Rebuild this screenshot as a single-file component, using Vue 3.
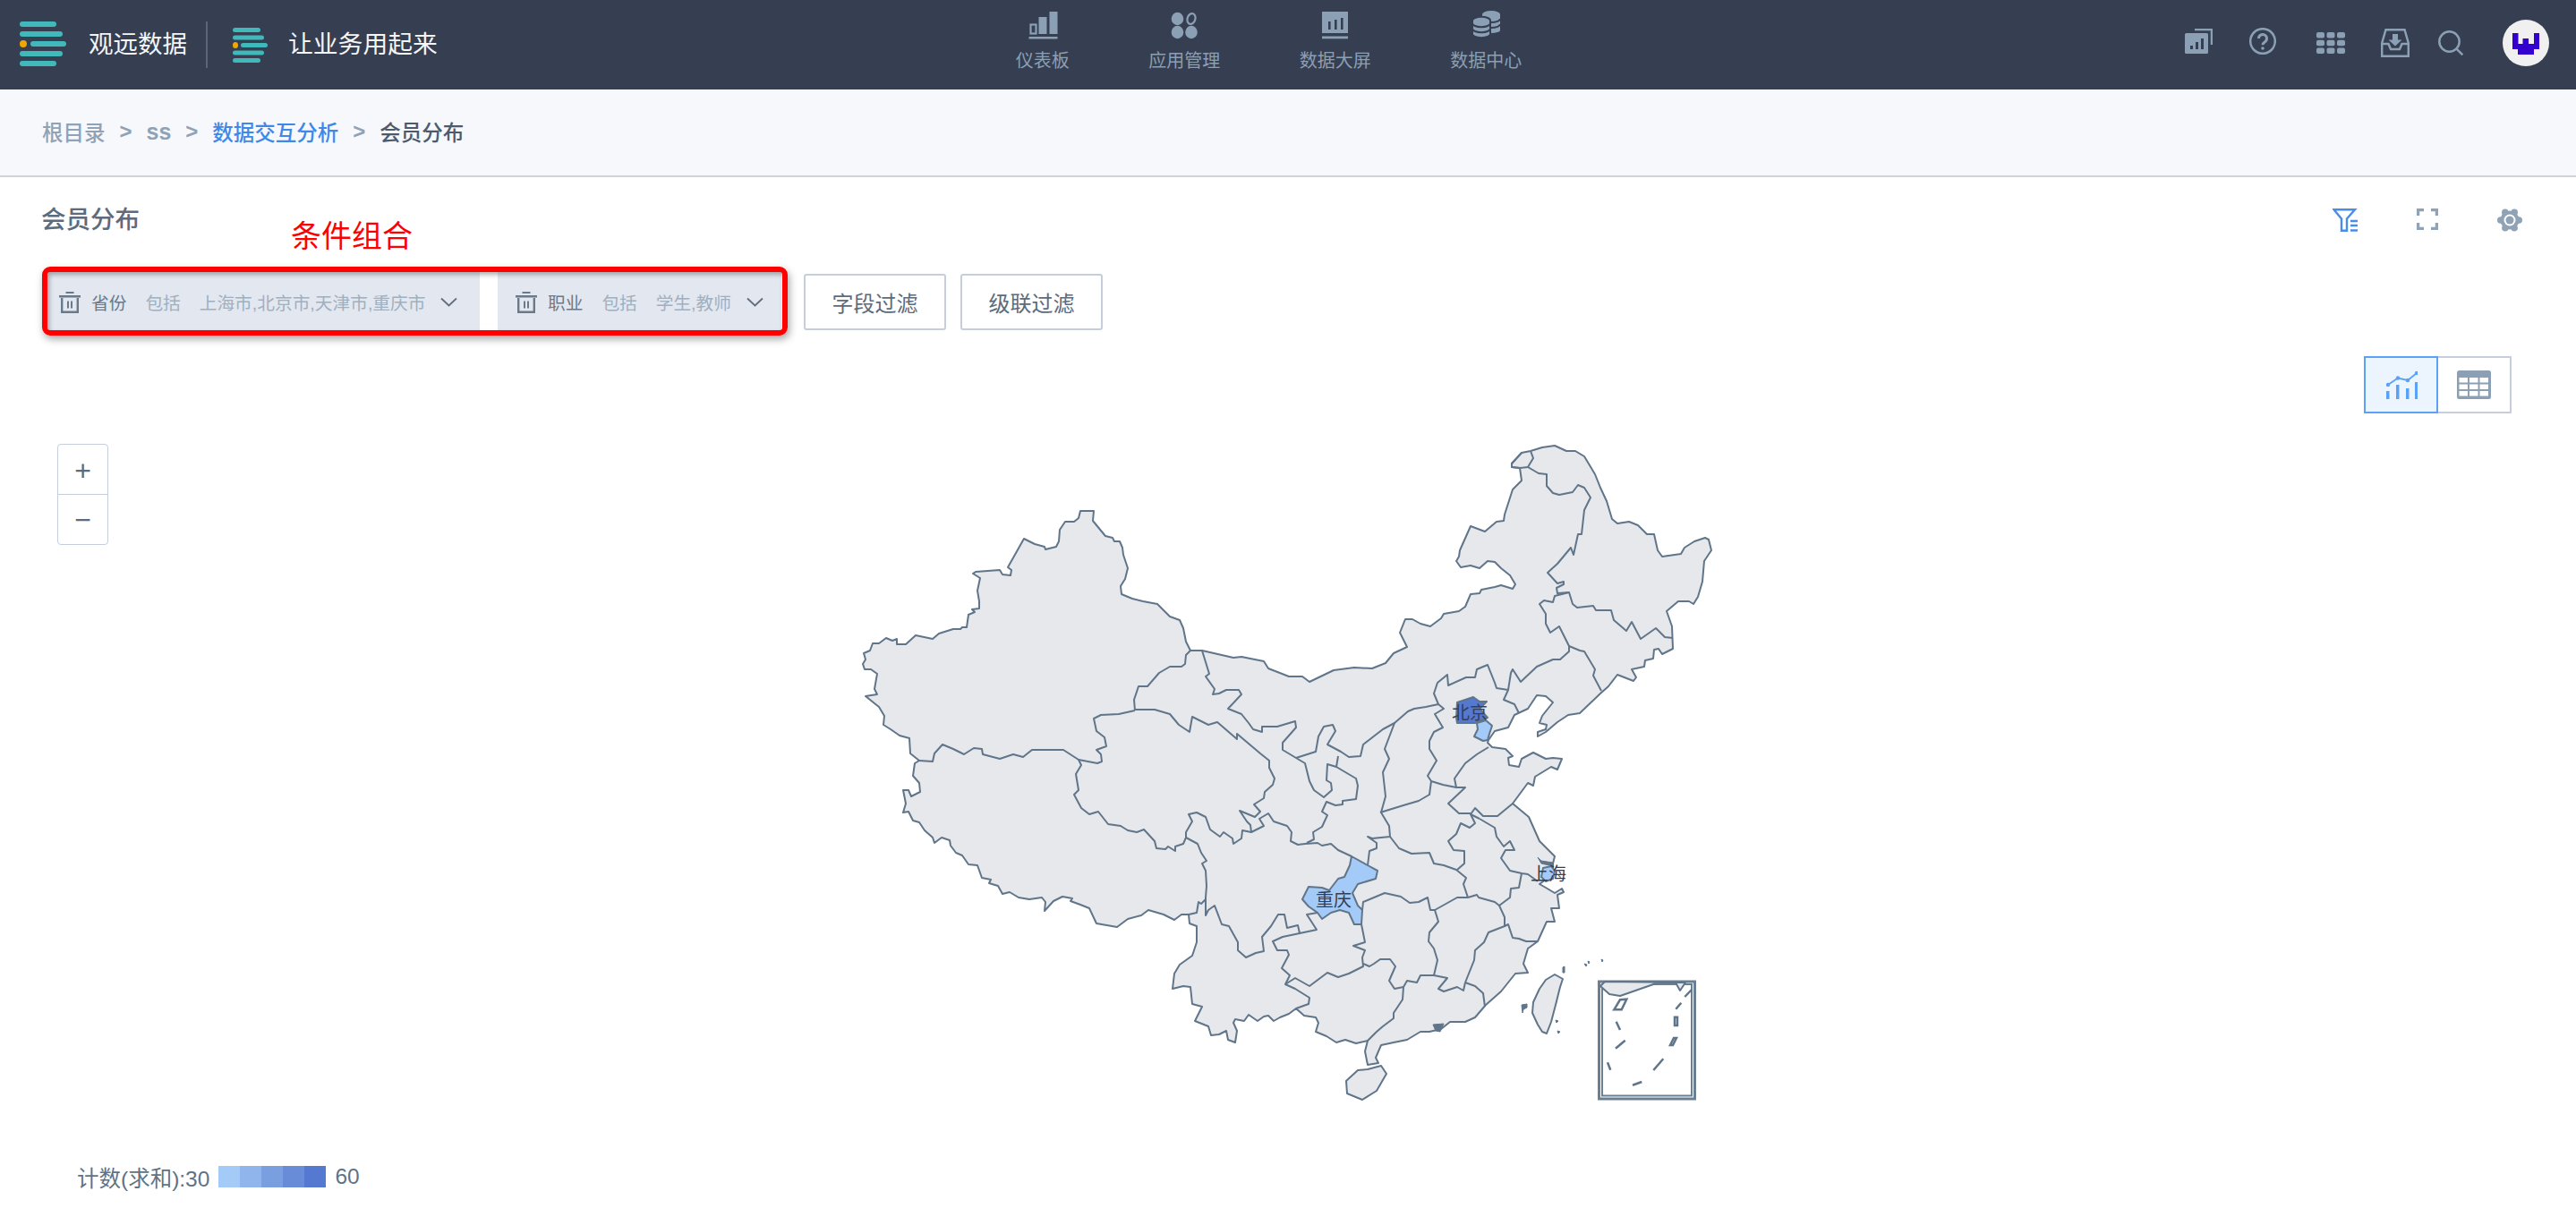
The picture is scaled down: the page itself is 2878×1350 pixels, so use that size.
<template>
  <div class="page">
    <header class="top-bar">
      <div class="brand">
        <svg class="logo-main" width="52" height="50" viewBox="0 0 52 50">
          <rect x="0" y="0" width="41" height="6" rx="3" />
          <rect x="0" y="11" width="48" height="6" rx="3" />
          <ellipse class="dot" cx="4" cy="25" rx="4" ry="4" />
          <rect x="12" y="22" width="40" height="6" rx="3" />
          <rect x="0" y="33" width="48" height="6" rx="3" />
          <rect x="0" y="44" width="41" height="6" rx="3" />
        </svg>
        <span class="brand-name">观远数据</span>
        <i class="brand-line"></i>
        <svg class="logo-sub" width="39" height="39" viewBox="0 0 39 39">
          <rect x="0" y="0" width="31" height="5" rx="2.5" />
          <rect x="0" y="8.5" width="35" height="5" rx="2.5" />
          <ellipse class="dot" cx="3" cy="19.5" rx="3" ry="3.5" />
          <rect x="9" y="17" width="30" height="5" rx="2.5" />
          <rect x="0" y="25.5" width="35" height="5" rx="2.5" />
          <rect x="0" y="34" width="31" height="5" rx="2.5" />
        </svg>
        <span class="brand-slogan">让业务用起来</span>
      </div>

      <nav class="main-nav">
        <a class="nav-item">
          <svg width="36" height="32" viewBox="0 0 36 32">
            <rect class="ln" x="4.5" y="15.5" width="6" height="10" />
            <rect x="13.5" y="7" width="9" height="19" />
            <rect x="25.5" y="1" width="9" height="25" />
            <rect x="2.5" y="29" width="32" height="2.5" />
          </svg>
          <span>仪表板</span>
        </a>
        <a class="nav-item">
          <svg width="36" height="32" viewBox="0 0 36 32">
            <ellipse cx="10.5" cy="9" rx="6.8" ry="7.2" />
            <ellipse class="ln" cx="26" cy="9" rx="4.4" ry="6" transform="rotate(18 26 9)" />
            <ellipse cx="10.5" cy="24" rx="6.8" ry="7.2" />
            <ellipse cx="26" cy="24" rx="6.8" ry="7.2" />
          </svg>
          <span>应用管理</span>
        </a>
        <a class="nav-item">
          <svg width="36" height="32" viewBox="0 0 36 32">
            <rect x="3" y="1" width="29" height="24" />
            <rect class="cut" x="10" y="12" width="2.6" height="9" />
            <rect class="cut" x="17" y="10" width="2.6" height="11" />
            <rect class="cut" x="24" y="8" width="2.6" height="13" />
            <rect x="3" y="28.5" width="29" height="2.8" />
          </svg>
          <span>数据大屏</span>
        </a>
        <a class="nav-item">
          <svg width="36" height="32" viewBox="0 0 36 32">
            <path d="M14 4a10 4 0 0 1 20 0v18a10 3 0 0 1-20 0z" />
            <path class="cut-line" d="M14 9a10 4 0 0 0 20 0M14 15a10 4 0 0 0 20 0" />
            <path class="front-coin" d="M3 11a10 4.2 0 0 1 20 0v16a10 4.2 0 0 1-20 0z" />
            <path class="cut-line" d="M3 14a10 4.2 0 0 0 20 0M3 20a10 4.2 0 0 0 20 0M3 26a10 4.2 0 0 0 20 0" />
          </svg>
          <span>数据中心</span>
        </a>
      </nav>

      <div class="tools">
        <svg class="tool-cards" width="31" height="28" viewBox="0 0 31 28">
          <path class="ln-wide" d="M11 1H30V18" />
          <rect x="0" y="5" width="26" height="23" rx="1.5" />
          <rect class="cut" x="6" y="19" width="3" height="4" />
          <rect class="cut" x="12" y="15" width="3" height="8" />
          <rect class="cut" x="18" y="11" width="3" height="12" />
        </svg>
        <svg class="tool-help" width="30" height="30" viewBox="0 0 30 30">
          <circle class="ln-wide" cx="15" cy="15" r="13.8" />
          <path class="ln-q" d="M10.5 12a4.5 4.5 0 1 1 7 3.7c-1.6 1-2.5 1.7-2.5 3.6" />
          <circle cx="15" cy="23" r="1.8" />
        </svg>
        <svg class="tool-grid" width="32" height="24" viewBox="0 0 32 24">
          <rect v-for="c in gridCells" :key="c.x + '-' + c.y" :x="c.x" :y="c.y" width="9" height="6.5" rx="2" />
        </svg>
        <svg class="tool-inbox" width="32" height="32" viewBox="0 0 32 32">
          <path class="ln-wide" d="M5.500 1.200H26.500L30.800 16V30.800H1.200V16ZM1.200 17H8.500L11 23H21L23.500 17H30.800" />
          <path d="M13 6H19V12.500H23.500L16 19.500 8.500 12.500H13Z" />
        </svg>
        <svg class="tool-search" width="28" height="28" viewBox="0 0 28 28">
          <circle class="ln-wide" cx="12.500" cy="12.500" r="11.200" />
          <path class="ln-wide" d="M20.800 20.800L27.300 27.300" />
        </svg>
        <div class="avatar">
          <svg width="30" height="24" viewBox="0 0 30 24">
            <polygon points="0,0 6.500,0 6.500,12 11.500,12 11.500,6 18,6 18,12 24,12 24,0 30,0 30,18 24,18 24,24 6,24 6,18 0,18" />
          </svg>
        </div>
      </div>
    </header>

    <div class="crumbs">
      <span class="crumb">根目录</span>
      <span class="sep">&gt;</span>
      <span class="crumb latin">ss</span>
      <span class="sep">&gt;</span>
      <span class="crumb link">数据交互分析</span>
      <span class="sep">&gt;</span>
      <span class="crumb current">会员分布</span>
    </div>

    <section class="title-row">
      <h2>会员分布</h2>
      <div class="title-actions">
        <svg width="28" height="26" viewBox="0 0 28 26">
          <path class="blue-line" d="M1.500 1.200H25L16 11.500V24.800H10V11.500Z" />
          <path class="blue-line" d="M20 14H28M20 19H28M20 24.500H28" />
        </svg>
        <svg width="24" height="24" viewBox="0 0 24 24">
          <path class="grey-line" d="M1.500 8V1.500H8M16 1.500H22.500V8M22.500 16V22.500H16M8 22.500H1.500V16" />
        </svg>
        <svg width="28" height="26" viewBox="0 0 28 26">
          <circle class="gear" cx="14" cy="13" r="10.500" />
          <circle v-for="l in gearLobes" :key="l.x" class="gear" :cx="l.x" :cy="l.y" r="3.800" />
          <circle class="gear-ring" cx="14" cy="13" r="6.500" />
          <circle class="gear" cx="14" cy="13" r="4.500" />
        </svg>
      </div>
    </section>

    <section class="filter-row">
      <div v-for="f in filters" :key="f.name" class="filter-item" :class="f.cls">
        <svg class="trash" width="24" height="25" viewBox="0 0 24 25">
          <path d="M0 5H24V7.500H0ZM7.500 1H16.500V3H7.500Z" />
          <path class="trash-box" d="M3.200 8V23.800H20.800V8" />
          <path d="M9 11.500H11V19.500H9ZM13 11.500H15V19.500H13Z" />
        </svg>
        <span class="filter-name">{{ f.name }}</span>
        <span class="filter-op">包括</span>
        <span class="filter-value">{{ f.value }}</span>
        <svg class="chevron" width="19" height="11" viewBox="0 0 19 11">
          <path d="M1 1.500L9.500 9.500 18 1.500" />
        </svg>
      </div>
      <button class="filter-btn first">字段过滤</button>
      <button class="filter-btn">级联过滤</button>

      <!-- 标注框 -->
      <div class="mark-box"></div>
      <span class="mark-text">条件组合</span>
    </section>

    <section class="view-row">
      <div class="view-toggle">
        <div class="view-cell active">
          <svg width="36" height="32" viewBox="0 0 36 32">
            <path class="trend" d="M3 16L14 8.500 25 11 35 3" />
            <circle cx="3" cy="16" r="2.200" />
            <circle cx="14" cy="8.500" r="2.200" />
            <circle cx="25" cy="11" r="2.200" />
            <circle cx="35" cy="3" r="2.200" />
            <rect x="1" y="23" width="3.500" height="9" />
            <rect x="12" y="16" width="3.500" height="16" />
            <rect x="23" y="20" width="3.500" height="12" />
            <rect x="33" y="13" width="3.500" height="19" />
          </svg>
        </div>
        <div class="view-cell">
          <svg width="38" height="32" viewBox="0 0 38 32">
            <rect class="table-bg" width="38" height="32" rx="2.500" />
            <rect v-for="c in tableCells" :key="c.x + '-' + c.y" class="table-cell" :x="c.x" :y="c.y" width="9.500" height="5.500" />
          </svg>
        </div>
      </div>
    </section>

    <section class="chart">
      <svg class="map" viewBox="0 462 2878 888" width="2878" height="888">
        <path class="land" :d="mainland" />
        <path class="region light" :d="chongqing" />
        <path class="region dark" :d="beijing" />
        <path class="region light" :d="tianjin" />
        <path class="region light" :d="shanghai" />
        <path v-for="(b, i) in borders" :key="i" class="border" :d="b" />
        <path class="land" :d="hainan" />
        <path class="land" :d="taiwan" />
        <path v-for="(d, i) in islets" :key="'s' + i" class="islet" :d="d" />

        <rect class="inset" x="1786.500" y="1097" width="107" height="131" />
        <rect class="inset-inner" x="1790" y="1100" width="100" height="124.500" />
        <path class="land" d="M1788,1102 1793,1097 1883,1098 1877,1107 1872,1098 1853,1098 1810,1113 1798,1111Z" />
        <path v-for="(d, i) in insetDashes" :key="'d' + i" class="dash" :d="d" />

        <text class="map-label" x="1642" y="804">北京</text>
        <text class="map-label" x="1490" y="1013">重庆</text>
        <text class="map-label" x="1730" y="984">上海</text>
      </svg>

      <div class="zoom-ctrl">
        <div class="zoom-btn">+</div>
        <div class="zoom-btn">−</div>
      </div>

      <div class="legend">
        <span>计数(求和):30</span>
        <div class="ramp">
          <i v-for="c in rampColors" :key="c" :style="{ background: c }"></i>
        </div>
        <span>60</span>
      </div>
    </section>
  </div>
</template>

<script setup>
const filters = [
  { name: '省份', value: '上海市,北京市,天津市,重庆市', cls: 'province' },
  { name: '职业', value: '学生,教师', cls: 'job' }
]

const rampColors = ['#a4cbf8', '#8fb5ec', '#7a9fe0', '#688cd8', '#5578d0']

const gearLobes = [
  { x: 24.2, y: 13 },
  { x: 19.1, y: 21.8 },
  { x: 8.9, y: 21.8 },
  { x: 3.8, y: 13 },
  { x: 8.8, y: 4.2 },
  { x: 19.2, y: 4.2 }
]

const gridCells = []
for (const y of [0, 8.75, 17.5]) {
  for (const x of [0, 11.5, 23]) gridCells.push({ x, y })
}

const tableCells = []
for (const y of [8, 15.5, 23]) {
  for (const x of [2.5, 14, 25.5]) tableCells.push({ x, y })
}

// 地图轮廓，坐标即页面像素
const mainland = `M1207,571 1222,571 1221,582 1230,593 1235,599 1243,601 1245,605 1251,605 1254,612 1255,620 1260,635 1257,647 1252,655 1253,664 1265,669 1277,672 1293,675 1300,682 1307,689 1318,693 1322,702 1325,717 1330,727
1343,727 1378,735 1387,734 1412,739 1417,747 1440,756 1455,756 1463,762 1490,749 1513,746 1533,747 1548,741 1557,730 1572,723 1564,707 1570,692 1578,692 1587,697 1598,700 1610,691 1613,686 1630,683 1637,678 1643,664 1653,663 1655,659 1670,656 1677,654 1690,658 1693,653 1687,643 1677,635 1670,628 1662,627 1653,635 1643,632 1632,634 1627,627 1630,622 1631,615 1643,588 1659,594 1672,583 1680,582 1681,575 1690,547 1700,537 1698,523 1689,522 1689,518 1700,506 1710,504 1723,500 1737,498 1750,504 1760,504 1770,510 1782,530 1788,545 1795,560 1801,580 1807,585 1820,583 1830,587 1840,597 1848,597 1852,615 1857,622 1878,619 1882,612 1893,605 1905,601 1909,603 1912,615 1904,627 1902,650 1897,667 1892,675 1887,672 1875,672 1862,683 1868,700 1869,725 1857,731 1853,725 1848,726 1847,736 1838,738 1837,745 1823,748 1828,757 1825,761 1807,754 1797,767 1788,775 1765,797 1752,799 1740,807 1727,818 1718,823 1718,818 1727,815 1728,810 1720,808 1723,800 1735,785 1727,778 1717,777 1707,792 1692,799 1685,813 1670,817 1663,827 1662,830 1667,835 1682,837 1690,845 1685,847 1686,855 1697,857 1700,848 1713,841 1727,848 1735,847 1745,848 1740,860 1733,857 1715,868 1713,878 1707,875 1690,898 1708,913 1720,940 1737,957 1735,965 1735,977 1720,988 1727,992 1737,998 1745,993 1747,997 1740,1000 1742,1015 1733,1015 1737,1030 1728,1030 1718,1052 1707,1060 1702,1077 1707,1087 1693,1088 1677,1108 1660,1123 1648,1137 1637,1142 1620,1142 1610,1150 1597,1153 1587,1153 1572,1162 1557,1165 1543,1168 1537,1182 1540,1188 1528,1190 1525,1175 1528,1163 1515,1166 1503,1162 1493,1165 1482,1158 1470,1153 1473,1143 1470,1137 1457,1135 1448,1127 1440,1133 1430,1137 1423,1141 1417,1135 1412,1136 1405,1141 1395,1134 1390,1141 1380,1139 1378,1143 1382,1152 1380,1165 1372,1162 1370,1152 1362,1156 1353,1157 1350,1147 1335,1141 1343,1125 1332,1122 1330,1103 1322,1102 1310,1105 1312,1088 1318,1078 1332,1068 1337,1053 1337,1035 1329,1032 1328,1022 1320,1022 1312,1028 1300,1022 1283,1017 1275,1023 1260,1027 1248,1036 1225,1032 1217,1015 1207,1011 1196,1007 1198,1004 1187,1002 1177,1007 1167,1018 1168,1008 1164,1003 1150,1005 1138,1003 1128,997 1120,999 1115,990 1105,987 1107,983 1097,981 1092,967 1082,966 1075,956 1068,953 1062,945 1061,939 1052,936 1044,942 1042,936 1033,928 1027,919 1020,917 1015,907 1009,908 1012,898 1009,883 1015,883 1018,890 1028,885 1027,875 1020,867 1022,853 1027,850 1017,842 1016,825 1005,822 995,815 987,810 988,800 982,790 967,778 980,776 977,770 980,753 973,748 966,748 964,742 967,737 965,730 972,727 975,719 982,719 990,713 997,716 1002,714 1002,720 1012,720 1023,710 1042,714 1049,708 1065,703 1073,703 1075,701 1080,701 1082,687 1089,684 1086,681 1094,680 1094,672 1092,660 1095,646 1087,641 1090,639 1117,637 1120,642 1129,643 1130,637 1126,634 1144,602 1156,608 1167,611 1168,614 1180,611 1183,605 1184,592 1190,583 1200,583 1205,579Z`

const chongqing = 'M1510,957 1528,967 1539,973 1537,982 1517,988 1511,998 1517,1012 1522,1017 1521,1033 1513,1033 1507,1020 1497,1017 1487,1020 1477,1027 1472,1020 1462,1013 1455,1005 1462,991 1477,992 1485,995 1495,982 1502,980 1508,967Z'
const beijing = 'M1628,785 1646,779 1653,784 1661,784 1653,792 1662,802 1648,808 1640,808 1628,808 1627,802Z'
const tianjin = 'M1650,808 1660,805 1667,811 1664,820 1662,827 1657,828 1647,823 1651,815Z'
const shanghai = 'M1724,970 1733,968 1737,973 1735,982 1727,985 1722,980Z'
const hainan = 'M1517,1196 1528,1195 1543,1191 1549,1200 1538,1219 1522,1229 1505,1222 1504,1208Z'
const taiwan = 'M1737,1089 1746,1094 1743,1103 1738,1123 1733,1142 1728,1155 1723,1153 1718,1145 1712,1132 1713,1120 1720,1105 1727,1095Z'

// 省界
const borders = [
  'M1330,727 1325,732 1324,742 1320,745 1307,745 1295,752 1282,767 1272,767 1267,782 1268,794',
  'M1268,794 1250,798 1230,799 1222,803 1225,817 1234,824 1236,834 1225,838 1230,843 1231,851 1226,853 1205,849 1188,838 1153,838 1143,846 1132,843 1117,848 1098,843 1097,837 1088,836 1077,843 1065,837 1053,832 1044,842 1042,851 1027,850',
  'M1205,849 1208,855 1202,865 1205,883 1200,888 1208,903 1217,910 1227,907 1238,921 1252,923 1260,928 1270,930 1278,927 1290,940 1292,948 1302,949 1305,946 1313,951 1313,946 1322,943 1325,936',
  'M1325,936 1338,943 1342,953 1348,962 1343,965 1347,973 1348,990 1347,1003 1347,1023 1350,1017 1357,1012 1365,1033 1373,1035 1383,1053 1383,1062 1392,1070 1403,1065 1412,1063 1410,1047 1420,1035 1428,1022 1435,1022 1438,1037 1450,1034 1452,1043 1471,1039 1460,1022 1472,1020',
  'M1328,1022 1337,1020 1339,1008 1342,1010 1347,1005',
  'M1268,793 1290,793 1307,798 1317,810 1329,818 1332,801 1350,810 1360,807 1382,826 1382,820 1408,842 1418,850 1418,858 1424,870 1422,877 1413,885 1412,892 1401,899 1408,907 1402,913 1385,906 1393,918 1397,922 1398,930 1388,928 1387,937 1378,943 1377,937 1367,930 1363,935 1352,927 1347,913 1337,908 1328,910 1332,918 1325,930 1325,936',
  'M1398,930 1412,923 1407,915 1417,909 1423,918 1438,923 1443,930 1442,940 1450,944 1458,943 1472,942 1477,945 1487,943 1495,950 1510,957',
  'M1343,727 1351,753 1347,756 1357,770 1355,776 1362,775 1370,771 1384,771 1387,776 1372,792 1387,798 1395,808 1400,815 1410,818 1410,812 1427,812 1447,806 1448,813 1433,830 1433,838 1448,847 1470,840 1473,823 1479,812 1489,810 1492,817 1483,832 1498,840 1507,846 1520,845 1523,832 1545,815 1558,808 1573,795 1580,792 1593,790 1607,787 1613,792 1603,798 1612,813 1602,818 1597,828 1597,837 1605,850 1595,867 1599,873 1597,888 1585,895 1568,900 1542,908',
  'M1448,847 1458,853 1463,873 1468,883 1479,891 1488,883 1487,875 1482,872 1483,854 1493,857 1495,845',
  'M1493,857 1515,870 1517,878 1515,893 1500,895 1500,899 1492,900 1482,896 1477,907 1483,911 1477,924 1467,930 1468,938 1460,942',
  'M1558,808 1547,837 1552,848 1545,863 1548,890 1543,908 1552,923 1553,935 1533,937 1528,935 1538,942 1538,948 1530,951 1528,967',
  'M1553,935 1563,948 1577,954 1597,953 1602,965 1613,967 1627,972 1638,981 1635,988 1640,1003',
  'M1607,787 1602,775 1606,763 1617,754 1618,766 1638,757 1648,757 1650,748 1662,743 1670,763 1672,769 1685,771 1680,782 1692,787 1697,797',
  'M1685,771 1688,752 1690,748 1699,762 1717,745 1735,737 1743,737 1753,728 1753,722 1742,700 1732,707 1727,697 1727,686 1720,675 1725,671 1735,673 1737,666 1753,662 1757,675 1762,679 1780,677 1783,682 1800,682 1803,693 1817,705 1823,695 1833,714 1850,702 1860,712 1869,713',
  'M1753,722 1765,727 1770,728 1782,748 1780,755 1789,772',
  'M1707,522 1713,512 1710,504',
  'M1707,522 1719,529 1728,530 1728,543 1735,551 1742,553 1757,550 1763,542 1770,545 1777,556 1770,570 1767,597 1763,597 1758,620 1755,612 1740,630 1729,640 1740,652 1747,650 1747,653 1739,657 1740,663 1753,662',
  'M1700,506 1689,518 1689,522 1698,523 1707,522',
  'M1663,835 1650,843 1637,853 1625,870 1627,880 1637,880 1618,898 1630,909 1643,909',
  'M1599,873 1612,877 1627,880',
  'M1690,898 1673,912 1657,912 1648,903 1643,910 1648,920 1642,925 1632,920 1627,932 1618,940 1624,950 1636,951 1636,965 1628,972',
  'M1653,915 1670,925 1672,935 1680,946 1687,940 1692,950 1682,950 1677,959 1687,973 1700,976 1707,977 1718,985',
  'M1643,910 1653,915',
  'M1700,976 1697,992 1688,993 1687,1003 1675,1012 1670,1008 1652,1003 1650,1000 1640,1003',
  'M1640,1003 1628,1003 1603,1017 1598,1017 1595,1003 1585,1008 1575,1009 1565,1002 1547,998 1523,1008 1522,1017',
  'M1603,1017 1607,1030 1597,1042 1596,1052 1602,1060 1606,1073 1602,1090',
  'M1675,1012 1681,1025 1681,1035 1663,1042 1658,1053 1648,1062 1647,1073 1637,1098',
  'M1681,1035 1685,1033 1690,1048 1697,1049 1705,1052 1717,1052',
  'M1637,1098 1648,1102 1657,1110 1659,1125',
  'M1637,1098 1635,1107 1628,1103 1613,1108 1607,1105 1617,1093 1602,1090 1587,1090 1583,1098 1572,1096 1568,1103',
  'M1568,1103 1558,1105 1552,1096 1559,1080 1553,1072 1542,1072 1535,1077 1530,1080 1523,1077',
  'M1568,1103 1567,1117 1557,1132 1557,1138 1545,1147 1538,1153 1528,1163',
  'M1521,1033 1525,1053 1512,1057 1525,1062 1522,1070 1523,1080 1507,1088 1495,1092 1483,1087 1463,1102 1447,1093 1436,1100',
  'M1452,1043 1433,1047 1422,1052 1427,1062 1438,1062 1440,1067 1432,1082 1441,1090 1436,1100 1447,1105 1463,1115 1462,1122 1448,1127'
]

const islets = [
  'M1700,1123 1706,1122 1706,1126 1702,1128 1701,1132Z',
  'M1746,1081 1748,1080 1748,1087 1746,1087Z',
  'M1770,1077 1773,1078 1772,1080Z',
  'M1774,1074 1776,1075 1775,1077Z',
  'M1789,1072 1791,1073 1790,1075Z',
  'M1738,1140 1741,1141 1739,1143Z',
  'M1740,1152 1743,1153 1741,1155Z',
  'M1601,1145 1613,1144 1609,1153 1604,1152Z',
  'M1718,958 1722,962 1735,964 1735,968 1722,965Z'
]

const insetDashes = [
  'M1803.300,1128.300 1810,1117.300 1817.300,1116.700 1811.700,1128.300Z',
  'M1805.700,1141.700 1810,1151',
  'M1805,1171.700 1815.700,1162.700',
  'M1796,1187.300 1799.300,1195.700',
  'M1824,1212.700 1834.300,1209',
  'M1847.300,1196 1858.300,1183.300',
  'M1866,1168 1869,1168 1873,1160 1870,1160Z',
  'M1871,1136.700 1874,1136.700 1874,1146 1871,1146Z',
  'M1872.300,1127.700 1878.300,1120.700',
  'M1882.300,1114 1890,1106'
]
</script>

<style>
html,
body {
  margin: 0;
  background: #fff;
  overflow: hidden;
}
</style>

<style scoped>
.page {
  width: 2878px;
  height: 1350px;
  display: flex;
  flex-direction: column;
  font-family: "Liberation Sans", "Noto Sans CJK SC", sans-serif;
  color: #5c6b7d;
  background: #fff;
}

/* 顶部导航 */
.top-bar {
  height: 100px;
  flex: none;
  display: flex;
  align-items: center;
  background: #363e51;
}

.brand {
  display: flex;
  align-items: center;
  padding-left: 22px;
  color: #f3f5f7;
}

.logo-main,
.logo-sub {
  fill: #41b8b9;
  flex: none;
}

.logo-main {
  margin-top: -2px;
}

.dot {
  fill: #f0a800;
}

.brand-name {
  margin-left: 25px;
  font-size: 27.500px;
  line-height: 36px;
}

.brand-line {
  width: 2px;
  height: 52px;
  margin: 0 28px 0 21px;
  background: #5c6577;
}

.brand-slogan {
  margin-left: 23px;
  font-size: 27.800px;
  line-height: 36px;
}

.main-nav {
  display: flex;
  gap: 88.500px;
  margin-left: 646px;
  align-self: flex-start;
  padding-top: 12px;
}

.nav-item {
  display: flex;
  flex-direction: column;
  align-items: center;
  color: #8b9fb3;
  font-size: 20px;
  line-height: 24px;
}

.nav-item svg,
.tools > svg {
  display: block;
  fill: #8ba0b5;
  stroke: none;
}

.nav-item span {
  margin-top: 12px;
}

.ln {
  fill: none !important;
  stroke: #8ba0b5;
  stroke-width: 2.200;
}

.cut {
  fill: #363e51;
}

.cut-line {
  fill: none;
  stroke: #363e51;
  stroke-width: 2;
}

.front-coin {
  stroke: #363e51;
  stroke-width: 2;
}

.tools {
  margin-left: auto;
  padding-right: 30px;
  display: flex;
  align-items: center;
}

.ln-wide {
  fill: none;
  stroke: #8ba0b5;
  stroke-width: 2.500;
}

.ln-q {
  fill: none;
  stroke: #8ba0b5;
  stroke-width: 3;
}

.tool-help {
  margin-left: 41px;
  margin-top: -8px;
}

.tool-cards {
  margin-top: -8px;
}

.tool-grid {
  margin-left: 45px;
  margin-top: -4px;
}

.tool-inbox {
  margin-left: 40px;
  margin-top: -4px;
}

.tool-search {
  margin-left: 32px;
  margin-top: -4px;
}

.avatar {
  width: 52px;
  height: 52px;
  margin-left: 44px;
  margin-top: -4px;
  border-radius: 50%;
  background: #f0f0f0;
  display: flex;
  align-items: center;
  justify-content: center;
}

.avatar svg {
  fill: #3300d0;
  margin-top: 2px;
}

/* 面包屑 */
.crumbs {
  height: 96px;
  flex: none;
  box-sizing: border-box;
  display: flex;
  align-items: center;
  padding: 0 0 2px 47px;
  background: #f6f8fc;
  border-bottom: 2px solid #ced3db;
  font-size: 23.500px;
  font-weight: 500;
  color: #8fa2b6;
  height: 98px;
}

.crumb.latin {
  font-weight: 700;
  font-size: 25px;
}

.crumb.link {
  color: #4088e8;
}

.crumb.current {
  color: #4e5a6b;
}

.sep {
  margin: 0 16px;
  font-size: 24px;
  font-weight: 700;
}

/* 标题行 */
.title-row {
  flex: none;
  height: 26px;
  margin-top: 35px;
  padding: 0 60px 0 46px;
  display: flex;
  align-items: center;
  justify-content: space-between;
}

.title-row h2 {
  margin: 0;
  font-size: 27.500px;
  line-height: 26px;
  font-weight: 500;
  color: #5c6b7d;
}

.title-actions {
  display: flex;
  gap: 66px;
}

.title-actions svg {
  display: block;
}

.blue-line {
  fill: none;
  stroke: #4a8de8;
  stroke-width: 2.400;
}

.grey-line {
  fill: none;
  stroke: #8fa2b6;
  stroke-width: 3.500;
}

.gear {
  fill: #8fa2b6;
}

.gear-ring {
  fill: #fff;
}

/* 过滤条件 */
.filter-row {
  position: relative;
  flex: none;
  height: 67px;
  margin-top: 45px;
  padding-left: 54px;
  display: flex;
  align-items: center;
}

.filter-item {
  height: 67px;
  box-sizing: border-box;
  flex: none;
  display: flex;
  align-items: center;
  background: #e3e7ef;
  font-size: 19.700px;
}

.filter-item.province {
  width: 482px;
  padding-left: 12px;
  margin-right: 20px;
}

.filter-item.job {
  width: 317px;
  padding-left: 20px;
}

.trash {
  fill: #6a7a8b;
  flex: none;
}

.trash-box {
  fill: none;
  stroke: #6a7a8b;
  stroke-width: 2.400;
}

.filter-name {
  margin-left: 12px;
  color: #6a7a8b;
}

.filter-op {
  margin-left: 21px;
  color: #9fb0c1;
}

.filter-value {
  margin-left: 21px;
  color: #9fb0c1;
}

.chevron {
  margin-left: 17px;
  fill: none;
  stroke: #5f6f80;
  stroke-width: 1.800;
}

.filter-btn {
  width: 159px;
  height: 63px;
  margin-left: 16px;
  border: 2px solid #c6cddb;
  border-radius: 3px;
  background: #fff;
  color: #5c6b7d;
  font-family: inherit;
  font-size: 24px;
  padding: 0;
}

.filter-btn.first {
  margin-left: 25px;
}

.mark-box {
  position: absolute;
  left: 47px;
  top: -6px;
  width: 833px;
  height: 77px;
  box-sizing: border-box;
  border: 6px solid #ff0000;
  border-radius: 9px;
  box-shadow: 2px 4px 8px rgba(60, 60, 60, 0.45), inset 2px 3px 5px rgba(60, 60, 60, 0.4);
  pointer-events: none;
}

.mark-text {
  position: absolute;
  left: 325px;
  top: -60px;
  font-size: 34px;
  line-height: 40px;
  color: #ff0000;
  font-weight: 400;
}

/* 视图切换 */
.view-row {
  flex: none;
  margin-top: 27px;
  padding-right: 72px;
  display: flex;
  justify-content: flex-end;
}

.view-toggle {
  display: flex;
}

.view-cell {
  width: 82px;
  height: 64px;
  box-sizing: border-box;
  border: 2px solid #c6cddb;
  border-left: none;
  display: flex;
  align-items: center;
  justify-content: center;
  background: #fff;
}

.view-cell.active {
  width: 83px;
  border: 2px solid #5aa2f8;
  background: #ecf4fe;
  fill: #5aa2f8;
}

.trend {
  fill: none;
  stroke: #5aa2f8;
  stroke-width: 1.800;
}

.table-bg {
  fill: #8ba0b5;
}

.table-cell {
  fill: #fff;
}

/* 地图 */
.chart {
  position: relative;
  flex: 1;
  min-height: 0;
}

.map {
  position: absolute;
  left: 0;
  top: 0;
  display: block;
}

.land {
  fill: #e6e8eb;
  stroke: #60758a;
  stroke-width: 2;
  stroke-linejoin: round;
}

.region {
  stroke: #60758a;
  stroke-width: 2;
  stroke-linejoin: round;
}

.region.light {
  fill: #a4cbf8;
}

.region.dark {
  fill: #5578d0;
}

.border {
  fill: none;
  stroke: #60758a;
  stroke-width: 2;
  stroke-linejoin: round;
}

.islet {
  fill: #60758a;
  stroke: #60758a;
  stroke-width: 1;
}

.inset {
  fill: #fff;
  stroke: #6b7f92;
  stroke-width: 3;
}

.inset-inner {
  fill: #fff;
  stroke: #6b7f92;
  stroke-width: 2;
}

.dash {
  fill: none;
  stroke: #60758a;
  stroke-width: 2.500;
}

.map-label {
  font-size: 20px;
  fill: #343f55;
  text-anchor: middle;
}

.zoom-ctrl {
  position: absolute;
  left: 64px;
  top: 34px;
  width: 57px;
  height: 113px;
  box-sizing: border-box;
  border: 1.500px solid #c6cddb;
  border-radius: 4px;
  background: #fff;
}

.zoom-btn {
  height: 55px;
  box-sizing: border-box;
  padding-top: 3px;
  display: flex;
  align-items: center;
  justify-content: center;
  font-size: 32px;
  color: #5c6b7d;
}

.zoom-btn + .zoom-btn {
  border-top: 1.500px solid #c6cddb;
}

.legend {
  position: absolute;
  left: 86px;
  top: 835px;
  height: 36px;
  display: flex;
  align-items: center;
  font-size: 24.500px;
  color: #5f7386;
}

.ramp {
  display: flex;
  margin: 0 10px;
}

.ramp i {
  width: 24px;
  height: 24px;
  display: block;
}
</style>
